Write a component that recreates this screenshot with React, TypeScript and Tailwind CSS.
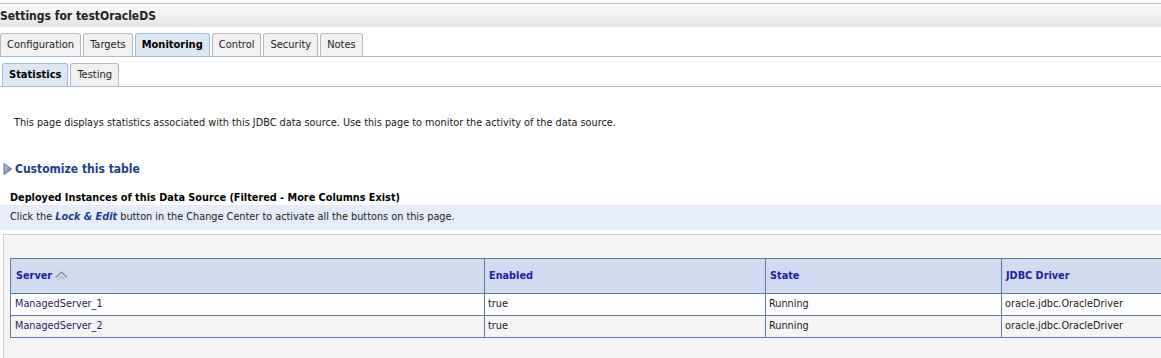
import React from 'react';

const tabs = ['Configuration', 'Targets', 'Monitoring', 'Control', 'Security', 'Notes'];
const subTabs = ['Statistics', 'Testing'];

const rows = [
  { server: 'ManagedServer_1', enabled: 'true', state: 'Running', driver: 'oracle.jdbc.OracleDriver' },
  { server: 'ManagedServer_2', enabled: 'true', state: 'Running', driver: 'oracle.jdbc.OracleDriver' },
];

const Tab = ({ label, active }: { label: string; active: boolean }) => (
  <div
    className={
      active
        ? 'h-full px-[6px] flex items-center font-bold text-black bg-[#dde8f3] border border-b-0 border-[#9fbcdc] rounded-t-[3px]'
        : 'h-full px-[6px] flex items-center text-[#222] bg-[#f1f1f1] border border-b-0 border-[#b9b9b9] rounded-t-[3px]'
    }
  >
    {label}
  </div>
);

const App = () => {
  return (
    <div className="w-[1161px] h-[358px] overflow-hidden bg-white text-[10.8px] text-[#1a1a1a]" style={{ fontFamily: 'Tahoma, "DejaVu Sans Condensed", "DejaVu Sans", sans-serif' }}>
      {/* title bar */}
      <div className="h-[3px]" />
      <div className="h-[24px] border-t border-[#c4c4c4] bg-gradient-to-b from-[#fbfbfb] to-[#e4e5e4] flex items-center font-bold text-[12px] text-[#222]">
        Settings for testOracleDS
      </div>

      {/* main tabs */}
      <div className="h-[30px] pt-[6px] flex gap-[2px] border-b border-[#9ebbd8] text-[11px]">
        {tabs.map((t) => (
          <Tab key={t} label={t} active={t === 'Monitoring'} />
        ))}
      </div>

      {/* sub tabs */}
      <div className="h-[30px] pt-[6px] pl-[2px] flex gap-[2px] border-b border-[#9ebbd8] text-[11px]">
        {subTabs.map((t) => (
          <Tab key={t} label={t} active={t === 'Statistics'} />
        ))}
      </div>

      <p className="pl-[14px] mt-[29px] leading-[14px]">
        This page displays statistics associated with this JDBC data source. Use this page to monitor the activity of the data source.
      </p>

      <div className="mt-[30px] flex items-center pl-[3px] gap-[3px] font-bold text-[12px] text-[#1f3f8e]">
        <svg width="9" height="12" viewBox="0 0 9 12">
          <defs>
            <linearGradient id="tri" x1="0" y1="0" x2="1" y2="1">
              <stop offset="0" stopColor="#c9d6ec" />
              <stop offset="1" stopColor="#4a67a8" />
            </linearGradient>
          </defs>
          <path d="M1 0.5 L8.5 6 L1 11.5 Z" fill="url(#tri)" stroke="#5c6f96" strokeWidth="1" />
        </svg>
        Customize this table
      </div>

      <div className="mt-[13px] pl-[10px] font-bold text-black leading-[14px]">
        Deployed Instances of this Data Source (Filtered - More Columns Exist)
      </div>

      <div className="h-[25px] bg-[#e6edf8] flex items-center pl-[10px]">
        Click the&nbsp;<span className="font-bold italic text-[#1f3f8e]">Lock &amp; Edit</span>&nbsp;button in the Change Center to activate all the buttons on this page.
      </div>

      {/* table panel */}
      <div className="mt-[4px] ml-[3px] h-[200px] bg-[#f5f5f5] border-t border-l border-[#cfcfcf] pt-[23px] pl-[6px]">
        <table className="w-[1160px] border-collapse border border-[#5e7a9f]">
          <thead>
            <tr className="h-[35px] bg-[#cfdcef] text-left">
              <th className="w-[474px] border border-[#5e7a9f] px-[5px] font-bold text-[#1c20a0]">
                <span className="inline-flex items-center gap-[3px]">
                  Server
                  <svg width="13" height="10" viewBox="0 0 13 10">
                    <path d="M1 6.5 L6.5 1 L12 6.5" fill="none" stroke="#7d879e" strokeWidth="1.2" />
                    <path d="M3.5 8.5 L6.5 5.5 L9.5 8.5" fill="none" stroke="#a9b2c4" strokeWidth="1.2" />
                  </svg>
                </span>
              </th>
              <th className="w-[281px] border border-[#5e7a9f] px-[4px] font-bold text-[#1c20a0]">Enabled</th>
              <th className="w-[236px] border border-[#5e7a9f] px-[4px] font-bold text-[#1c20a0]">State</th>
              <th className="border border-[#5e7a9f] px-[4px] font-bold text-[#1c20a0]">JDBC Driver</th>
            </tr>
          </thead>
          <tbody>
            {rows.map((r, i) => (
              <tr key={r.server} className={i === 0 ? 'h-[22px] bg-white' : 'h-[22px] bg-[#f5f5f5]'}>
                <td className="border border-[#5e7a9f] px-[4px] text-[#2a1a5e]">{r.server}</td>
                <td className="border border-[#5e7a9f] px-[3px]">{r.enabled}</td>
                <td className="border border-[#5e7a9f] px-[3px]">{r.state}</td>
                <td className="border border-[#5e7a9f] px-[3px]">{r.driver}</td>
              </tr>
            ))}
          </tbody>
        </table>
      </div>
    </div>
  );
};

export default App;
